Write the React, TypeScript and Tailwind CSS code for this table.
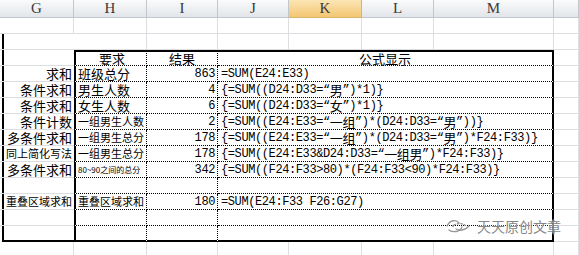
import React from "react";

const CJK = /[\u3000-\u9fff\uff00-\uffef]/;

function Mixed({ text }: { text: string }) {
  const parts: { s: string; c: boolean }[] = [];
  for (const ch of text) {
    const c = CJK.test(ch);
    const last = parts[parts.length - 1];
    if (last && last.c === c) last.s += ch;
    else parts.push({ s: ch, c });
  }
  return (
    <>
      {parts.map((p, i) =>
        p.c ? (
          <span key={i} className="font-['Noto_Sans_CJK_SC',sans-serif] text-[13px]">
            {p.s}
          </span>
        ) : (
          <span key={i}>{p.s}</span>
        )
      )}
    </>
  );
}

type Row = {
  g: string;
  gs?: string;
  h: string;
  hs?: string;
  i: string;
  f: string;
  head?: boolean;
};

const rows: Row[] = [
  { g: "", h: "要求", i: "结果", f: "公式显示", head: true },
  { g: "求和", h: "班级总分", i: "863", f: "=SUM(E24:E33)" },
  { g: "条件求和", h: "男生人数", i: "4", f: "{=SUM((D24:D33=“男”)*1)}" },
  { g: "条件求和", h: "女生人数", i: "6", f: "{=SUM((D24:D33=“女”)*1)}" },
  { g: "条件计数", h: "一组男生人数", hs: "s", i: "2", f: "{=SUM((E24:E33=“一组”)*(D24:D33=“男”))}" },
  { g: "多条件求和", h: "一组男生总分", hs: "s", i: "178", f: "{=SUM((E24:E33=“一组”)*(D24:D33=“男”)*F24:F33)}" },
  { g: "同上简化写法", gs: "s", h: "一组男生总分", hs: "s", i: "178", f: "{=SUM((E24:E33&D24:D33=“一组男”)*F24:F33)}" },
  { g: "多条件求和", h: "80~90之间的总分", hs: "xs", i: "342", f: "{=SUM((F24:F33>80)*(F24:F33<90)*F24:F33)}" },
  { g: "", h: "", i: "", f: "" },
  { g: "重叠区域求和", gs: "s", h: "重叠区域求和", hs: "s", i: "180", f: "=SUM(E24:F33 F26:G27)" },
  { g: "", h: "", i: "", f: "" },
  { g: "", h: "", i: "", f: "" },
];

const cols = ["G", "H", "I", "J", "K", "L", "M", ""];

const grid = "border-r border-b border-[#dcdee2]";
const hdr =
  "flex items-center justify-center border-r border-b border-[#c3c7cd] bg-linear-to-b from-[#fbfbfc] to-[#e2e5e9] text-[#3a3a3a] font-['Liberation_Serif',serif] text-[15px] leading-none";
const hdrSel =
  "flex items-center justify-center border-r border-b border-[#d9b56a] bg-linear-to-b from-[#fbe6b4] to-[#f3c671] text-[#3a3a3a] font-['Liberation_Serif',serif] text-[15px] leading-none";

function sizeCls(s?: string) {
  if (s === "s") return "text-[11px]";
  if (s === "xs") return "text-[8px]";
  return "text-[13px]";
}

export default function App() {
  return (
    <div className="relative w-[579px] h-[255px] overflow-hidden bg-white text-black">
      <div className="grid grid-cols-[74px_73px_71px_71px_73px_72px_120px_25px] grid-rows-[18px_repeat(15,16px)]">
        {cols.map((c, idx) => (
          <div key={"h" + idx} className={c === "K" ? hdrSel : hdr}>
            {c}
          </div>
        ))}

        {/* row A */}
        {cols.map((_, idx) => (
          <div key={"a" + idx} className={grid} />
        ))}

        {/* row B */}
        <div className="border-b border-[#dcdee2] pl-[2px]">
          <div className="h-full border-l-2 border-black" />
        </div>
        {cols.slice(1).map((_, idx) => (
          <div key={"b" + idx} className={grid} />
        ))}

        {rows.map((r, ri) => {
          const last = ri === rows.length - 1;
          const first = ri === 0;
          return (
            <React.Fragment key={"r" + ri}>
              <div className={last ? "pl-[2px]" : "border-b border-[#dcdee2] pl-[2px]"}>
                <div
                  className={
                    (last ? "border-b-2 " : "") +
                    "h-full border-l-2 border-black flex items-center justify-end pr-[2px] font-['Noto_Sans_CJK_SC',sans-serif] leading-none " +
                    sizeCls(r.gs)
                  }
                >
                  {r.g}
                </div>
              </div>
              <div
                className={
                  (first ? "border-t-2 " : "") +
                  (last ? "border-b-2 [border-bottom-style:solid] " : "border-b [border-bottom-style:dotted] ") +
                  "border-l-2 border-r border-black [border-left-style:solid] [border-right-style:dotted] [border-top-style:solid] flex items-center pl-[2px] font-['Noto_Sans_CJK_SC',sans-serif] leading-none whitespace-nowrap overflow-hidden " +
                  (r.head ? "justify-center " : "") +
                  sizeCls(r.hs)
                }
              >
                {r.h}
              </div>
              <div
                className={
                  (first ? "border-t-2 " : "") +
                  (last ? "border-b-2 [border-bottom-style:solid] " : "border-b [border-bottom-style:dotted] ") +
                  "border-r border-black [border-right-style:dotted] [border-top-style:solid] flex items-center leading-none " +
                  (r.head
                    ? "justify-center font-['Noto_Sans_CJK_SC',sans-serif] text-[13px]"
                    : "justify-end pr-[2px] font-['Liberation_Mono',monospace] text-[12px] tracking-[-0.4px]")
                }
              >
                {r.i}
              </div>
              <div
                className={
                  (first ? "border-t-2 " : "") +
                  (last ? "border-b-2 [border-bottom-style:solid] " : "border-b [border-bottom-style:dotted] ") +
                  "col-span-4 border-r-2 border-black [border-right-style:solid] [border-top-style:solid] flex items-center leading-none whitespace-nowrap " +
                  (r.head
                    ? "justify-center font-['Noto_Sans_CJK_SC',sans-serif] text-[13px]"
                    : "pl-[3px] font-['Liberation_Mono','Noto_Sans_CJK_SC',monospace] text-[12px] tracking-[-0.4px]")
                }
              >
                {r.head ? r.f : <Mixed text={r.f} />}
              </div>
              <div className={grid} />
            </React.Fragment>
          );
        })}

        {/* row after table */}
        {cols.map((_, idx) => (
          <div key={"z" + idx} className={grid} />
        ))}
      </div>

      {/* watermark */}
      <div className="absolute left-[444px] top-[217px] flex items-center gap-[3px] opacity-90">
        <svg width="30" height="18" viewBox="0 0 30 18" fill="none" stroke="#8a8a8a" strokeWidth="1.3" strokeLinecap="round">
          <path d="M3 9 C6 3, 12 2, 15 6" />
          <path d="M5 13 C9 16, 16 15, 18 10" />
          <path d="M10 8 C13 6, 19 6, 22 9" strokeDasharray="1.5 2" />
          <path d="M12 12 C16 14, 22 13, 25 9" />
          <circle cx="9" cy="9" r="1" fill="#8a8a8a" stroke="none" />
        </svg>
        <span className="font-['Noto_Sans_CJK_SC',sans-serif] text-[14px] leading-none text-[#7a7a7a] [text-shadow:0_0_2px_#fff,0_0_2px_#fff]">
          天天原创文章
        </span>
      </div>
    </div>
  );
}
